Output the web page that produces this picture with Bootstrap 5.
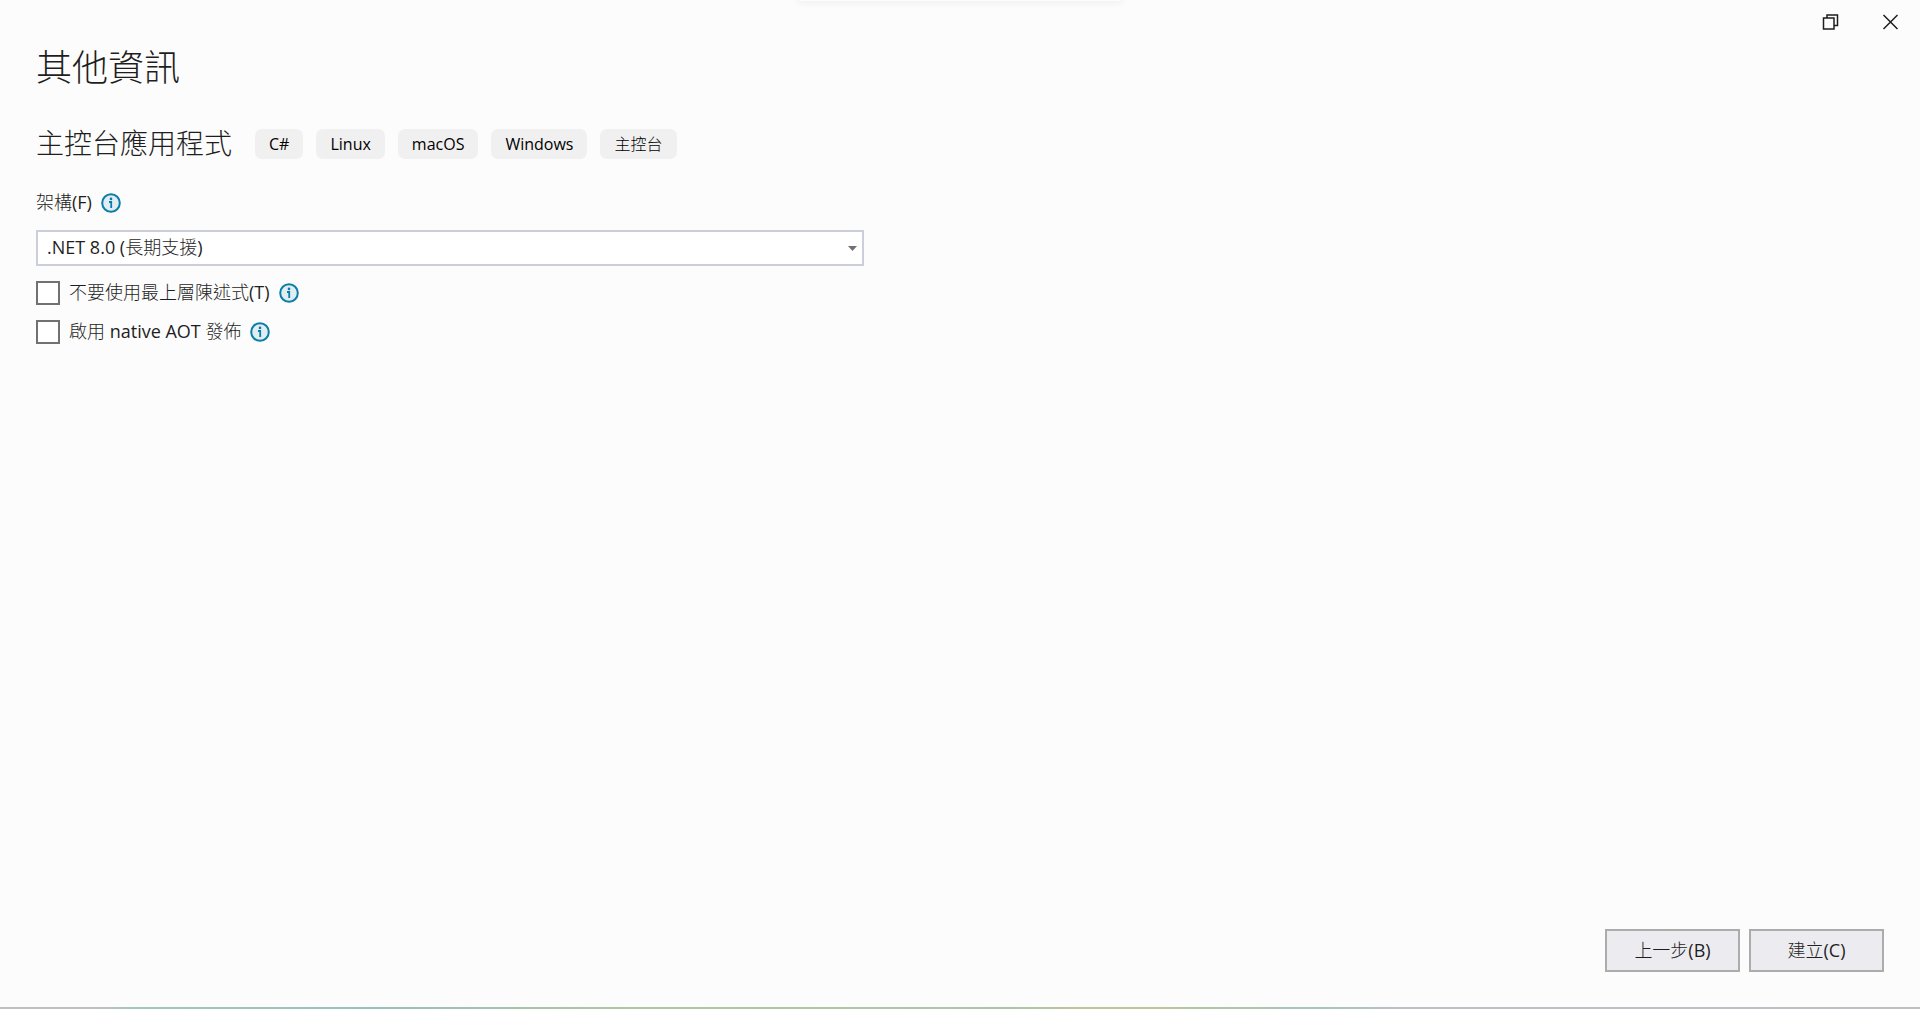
<!DOCTYPE html>
<html lang="zh-Hant">
<head>
<meta charset="utf-8">
<meta name="viewport" content="width=device-width, initial-scale=1">
<title>其他資訊</title>
<link href="https://cdn.jsdelivr.net/npm/bootstrap@5.3.0/dist/css/bootstrap.min.css" rel="stylesheet">
<style>
body{background:#fcfcfc;color:#1e1e1e;font-family:"Open Sans","Noto Sans CJK TC Light","Noto Sans CJK TC",sans-serif;font-size:18px;line-height:24px;font-weight:400}
.dialog{position:relative;border-bottom:2px solid;border-image:linear-gradient(90deg,#c0bfc6 0,#c0bfc6 5%,#a4c6c0 7%,#9cc0bc 20%,#a6c2b0 26%,#b0c6a4 33%,#aec6a8 48%,#acc4aa 52%,#bac69c 56%,#bcc69a 60%,#aec6a8 64%,#a8c4c0 69%,#bebec6 73%,#c0bfc6 100%) 1}
.top-shadow{position:absolute;top:0;left:50%;width:320px;height:1px;margin-left:-160px;box-shadow:0 0 6px 2px #eee}
.titlebar{height:44px}
.win-btn{width:60px;background:none;border:0;padding:0;color:#1e1e1e}
.dialog-body{padding:0 36px}
.page-title{font-size:36px;line-height:48px;font-weight:300;margin-bottom:31px}
.sub-title{font-size:28px;line-height:40px;font-weight:300;margin:0 23px 0 0}
.headline{margin-bottom:28px}
.tag-list{gap:13px;padding-top:2px}
.tag{background:#f0f0f0;color:#000;border-radius:7px;font-size:16px;line-height:30px;padding:0 14px}
.form-stack{gap:15px}
.field-row{gap:9px;min-height:24px}
.field-row label{padding-bottom:2px;line-height:22px}
.framework{max-width:828px;height:36px;padding:0 32px 2px 9px;font-size:18px;line-height:24px;color:#1e1e1e;background-color:#fff;border:2px solid #cccedb;border-radius:0;background-image:url("data:image/svg+xml,%3Csvg xmlns='http://www.w3.org/2000/svg' viewBox='0 0 9 5'%3E%3Cpath fill='%23717171' d='M0 0h9L4.500 5z'/%3E%3C/svg%3E");background-size:9px 5px;background-position:right 5px center}
.form-check-input.option{float:none;width:24px;height:24px;margin:0;border:2px solid #717171;border-radius:0;background-color:#fff}
.wizard-btn{width:135px;height:43px;padding:0 0 2px;border:2px solid #acacac;border-radius:0;background:#ececf0;color:#1e1e1e;font-size:18px;line-height:24px}
.dialog-footer{gap:9px;padding:0 36px 35px}
</style>
<script src="https://cdn.jsdelivr.net/npm/bootstrap@5.3.0/dist/js/bootstrap.bundle.min.js" defer></script>
</head>
<body>
<svg class="d-none"><symbol id="info" viewBox="0 0 20 20"><circle cx="10" cy="10" r="8.800" fill="#e0edf2" stroke="#0a7ea8" stroke-width="2"/><circle cx="10" cy="5.900" r="1.300" fill="#0a7ea8"/><path d="M8 9h2.200V15" fill="none" stroke="#0a7ea8" stroke-width="1.800"/></symbol></svg>
<div class="dialog d-flex flex-column min-vh-100">
  <div class="top-shadow"></div>
  <header class="titlebar d-flex justify-content-end">
    <button class="win-btn d-flex align-items-center justify-content-center" type="button" aria-label="還原"><svg width="18" height="18" viewBox="0 0 18 18" fill="none" stroke="currentColor" stroke-width="1.500"><path d="M6 5V2h10.500v10.500H13M2.500 5H13v11H2.500z"/></svg></button>
    <button class="win-btn d-flex align-items-center justify-content-center" type="button" aria-label="關閉"><svg width="16" height="16" viewBox="0 0 16 16" fill="none" stroke="currentColor" stroke-width="1.500"><path d="M1.500 1l14 14M15.500 1l-14 14"/></svg></button>
  </header>
  <main class="dialog-body flex-grow-1">
    <h1 class="page-title">其他資訊</h1>
    <div class="headline d-flex align-items-center flex-wrap">
      <h2 class="sub-title">主控台應用程式</h2>
      <div class="tag-list d-flex flex-wrap">
        <span class="tag">C#</span><span class="tag">Linux</span><span class="tag">macOS</span><span class="tag">Windows</span><span class="tag">主控台</span>
      </div>
    </div>
    <div class="form-stack d-flex flex-column">
      <div class="field-row d-flex align-items-center"><label for="fw">架構(F)</label><svg width="20" height="20"><use href="#info"/></svg></div>
      <select class="form-select framework" id="fw"><option>.NET 8.0 (長期支援)</option></select>
      <div class="field-row d-flex align-items-center"><input class="form-check-input option" type="checkbox" id="top"><label for="top">不要使用最上層陳述式(T)</label><svg width="20" height="20"><use href="#info"/></svg></div>
      <div class="field-row d-flex align-items-center"><input class="form-check-input option" type="checkbox" id="aot"><label for="aot">啟用 native AOT 發佈</label><svg width="20" height="20"><use href="#info"/></svg></div>
    </div>
  </main>
  <footer class="dialog-footer d-flex justify-content-end">
    <button class="btn wizard-btn" type="button">上一步(B)</button>
    <button class="btn wizard-btn" type="button">建立(C)</button>
  </footer>
</div>
</body>
</html>
